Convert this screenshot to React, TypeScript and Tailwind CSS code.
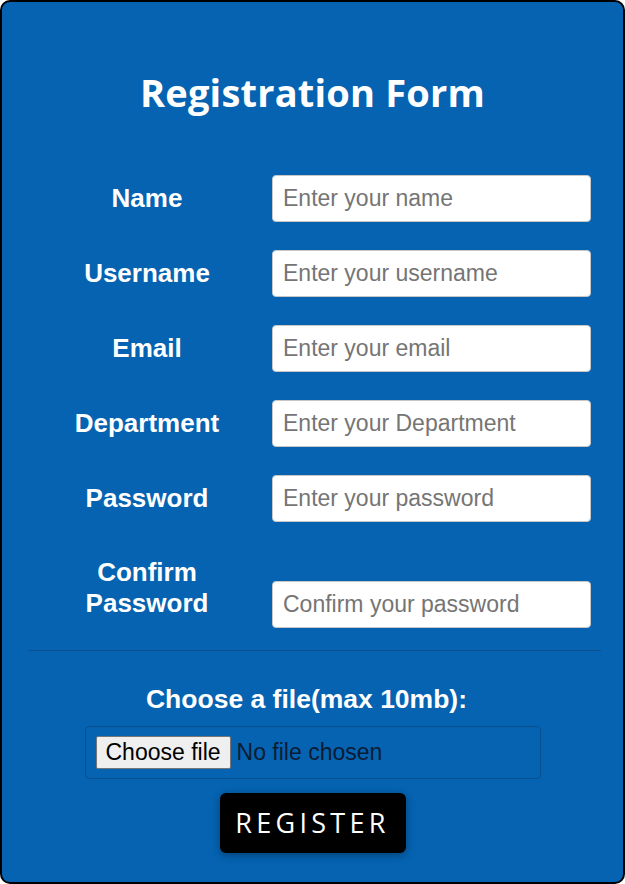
import React from "react";

const fields = [
  { label: "Name", placeholder: "Enter your name", type: "text" },
  { label: "Username", placeholder: "Enter your username", type: "text" },
  { label: "Email", placeholder: "Enter your email", type: "email" },
  { label: "Department", placeholder: "Enter your Department", type: "text" },
  { label: "Password", placeholder: "Enter your password", type: "password" },
];

const inputCls =
  "w-[319px] h-[47px] rounded-[4px] border border-[#c7c7c7] bg-white px-[10px] text-[23px] text-[#222] placeholder:text-[#757575] outline-none font-['Liberation_Sans',Arial,sans-serif]";

export default function App() {
  return (
    <div className="h-[884px] w-[625px] overflow-hidden bg-white">
      <div className="flex h-[884px] w-[625px] flex-col items-center rounded-[10px] border-2 border-black bg-[#0563b1] font-['Liberation_Sans',Arial,sans-serif] text-white">
        {/* Title */}
        <h1 className="mt-[67px] text-[38px] leading-[46px] font-bold font-['Open_Sans',sans-serif] tracking-[0.2px]">
          Registration Form
        </h1>

        {/* Fields */}
        <div className="mt-[60px] flex w-full flex-col gap-[28px] pl-[26px]">
          {fields.map((f) => (
            <div key={f.label} className="flex items-center">
              <label className="w-[238px] text-center text-[26px] font-bold">{f.label}</label>
              <input type={f.type} placeholder={f.placeholder} className={`${inputCls} ml-[6px]`} />
            </div>
          ))}
          <div className="flex items-start">
            <label className="mt-[7px] w-[238px] text-center text-[26px] leading-[31px] font-bold">
              Confirm
              <br />
              Password
            </label>
            <input type="password" placeholder="Confirm your password" className={`${inputCls} ml-[6px] mt-[31px]`} />
          </div>
        </div>

        {/* Divider */}
        <div className="mt-[22px] h-px w-[573px] ml-[4px] bg-[#0b4f8c]" />

        {/* File */}
        <p className="mt-[33px] text-[26.5px] font-bold leading-[30px] ml-[-12px]">Choose a file(max 10mb):</p>
        <div className="mt-[12px] flex h-[53px] w-[456px] items-center rounded-[4px] border border-[#0a4f8d] px-[10px]">
          <button className="h-[33px] rounded-[2px] border border-[#767676] bg-[#efefef] px-[9px] text-[23px] leading-[27px] text-black">
            Choose file
          </button>
          <span className="ml-[6px] text-[23px] text-[#0b1b33]">No file chosen</span>
        </div>

        {/* Submit */}
        <button className="mt-[14px] h-[60px] w-[186px] rounded-[6px] bg-black text-[27px] tracking-[4.3px] text-white shadow-[0_2px_8px_rgba(0,0,0,0.35)] font-['Open_Sans',sans-serif]">
          REGISTER
        </button>
      </div>
    </div>
  );
}
